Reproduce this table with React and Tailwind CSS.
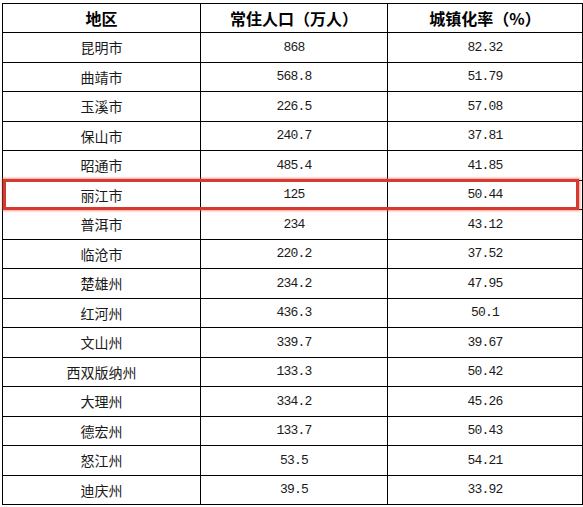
const rows = [
  ['昆明市', '868', '82.32'],
  ['曲靖市', '568.8', '51.79'],
  ['玉溪市', '226.5', '57.08'],
  ['保山市', '240.7', '37.81'],
  ['昭通市', '485.4', '41.85'],
  ['丽江市', '125', '50.44'],
  ['普洱市', '234', '43.12'],
  ['临沧市', '220.2', '37.52'],
  ['楚雄州', '234.2', '47.95'],
  ['红河州', '436.3', '50.1'],
  ['文山州', '339.7', '39.67'],
  ['西双版纳州', '133.3', '50.42'],
  ['大理州', '334.2', '45.26'],
  ['德宏州', '133.7', '50.43'],
  ['怒江州', '53.5', '54.21'],
  ['迪庆州', '39.5', '33.92'],
]

const cjk = { fontFamily: '"Noto Sans CJK SC", sans-serif' }
const num = { fontFamily: '"Liberation Mono", "Noto Sans CJK SC", monospace' }

export default function App() {
  return (
    <div className="w-[583px] h-[507px] bg-white pt-[3px] pl-[2px]">
      <table className="border-collapse table-fixed w-[580px] text-[#1a1a1a]">
        <colgroup>
          <col className="w-[198px]" />
          <col className="w-[187px]" />
          <col className="w-[195px]" />
        </colgroup>
        <thead>
          <tr className="h-[29px]">
            <th className="border border-black text-[16px] font-bold text-black leading-none" style={cjk}>地区</th>
            <th className="border border-black text-[16px] font-bold text-black leading-none" style={cjk}>常住人口（万人）</th>
            <th className="border border-black text-[16px] font-bold text-black leading-none" style={cjk}>城镇化率（%）</th>
          </tr>
        </thead>
        <tbody>
          {rows.map((r, i) => (
            <tr key={i} className="h-[29.5px] relative">
              <td className="border border-black text-center text-[14px] leading-none p-0 relative" style={cjk}>
                {r[0]}
                {r[0] === '丽江市' && (
                  <div className="absolute left-0 top-[-2px] w-[576px] h-[31px] border-[3px] border-[#d63a2f] shadow-[0_0_2px_1px_rgba(230,90,80,0.6)] pointer-events-none" />
                )}
              </td>
              <td className="border border-black text-center text-[13px] tracking-[-0.8px] leading-none p-0" style={num}>{r[1]}</td>
              <td className="border border-black text-center text-[13px] tracking-[-0.8px] leading-none p-0" style={num}>{r[2]}</td>
            </tr>
          ))}
        </tbody>
      </table>
    </div>
  )
}
